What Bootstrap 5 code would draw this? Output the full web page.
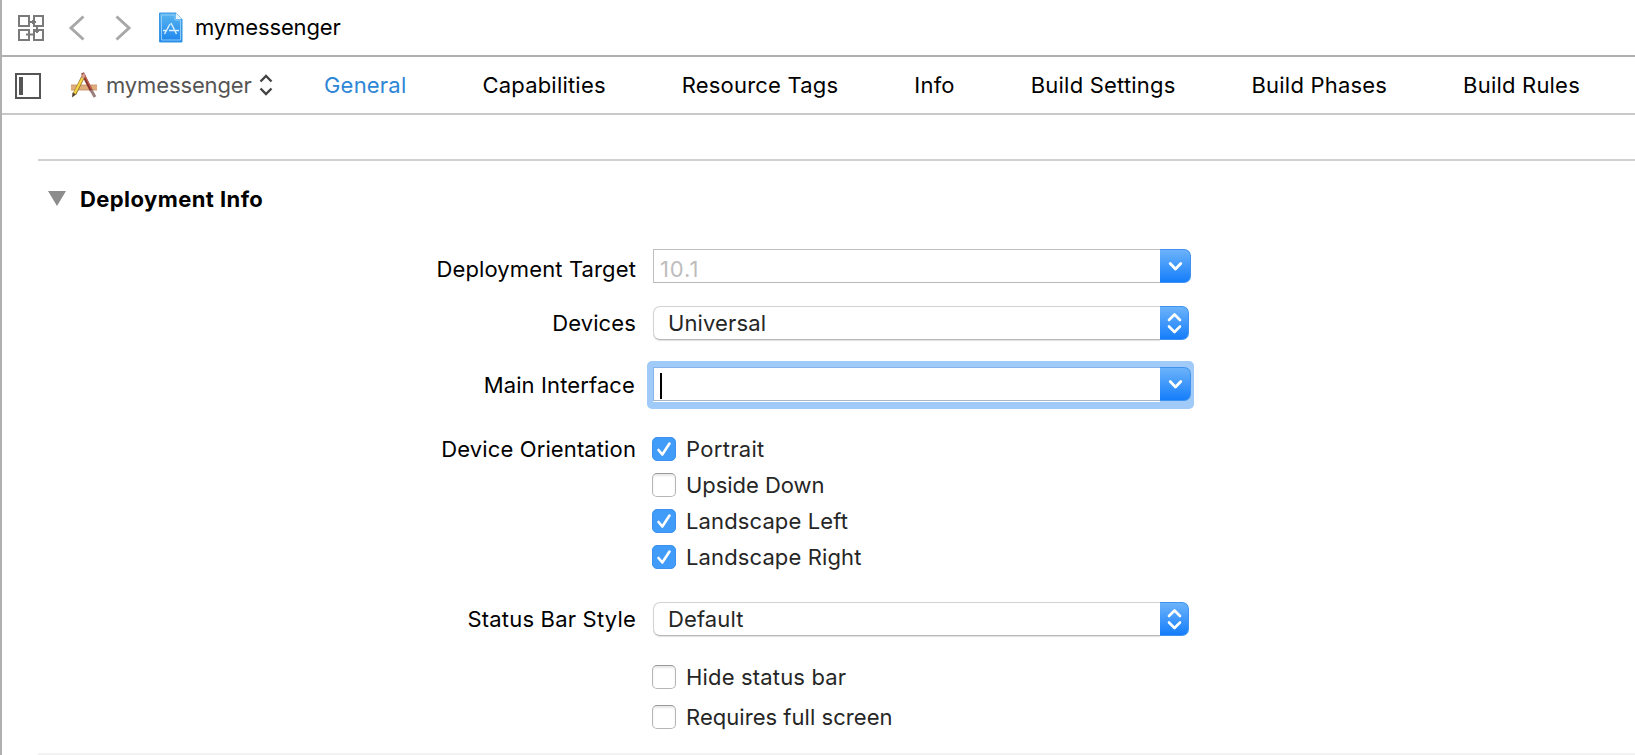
<!DOCTYPE html>
<html lang="en">
<head>
<meta charset="utf-8">
<title>mymessenger</title>
<link rel="stylesheet" href="https://cdn.jsdelivr.net/npm/bootstrap@5.3.0/dist/css/bootstrap.min.css">
<style>
body{font-family:Inter,"Liberation Sans",sans-serif;font-size:22px;line-height:34px;letter-spacing:.12px;color:#000;background:#fff;overflow:hidden}
.editor{height:755px;border-left:2px solid #b0b0b0;overflow:hidden}
svg{display:block;flex:none}
.jumpbar{height:57px;border-bottom:2px solid #b0b0b0;padding-left:15px}
.back{margin-left:23px}
.forward{margin-left:28px}
.doc-icon{margin-left:27px}
.doc-name{margin:-2px 0 0 12px;letter-spacing:-.12px}
.tabbar{height:58px;border-bottom:2px solid #c9c9c9;padding-left:13px}
.app-icon{margin-left:29px}
.project{color:#555;width:153px;margin-left:8px;letter-spacing:-.12px}
.tabs{gap:76px;letter-spacing:.2px;margin-left:51px}
.tabs a{color:#000;text-decoration:none}
.tabs a.current{color:#2d86d6}
.section-body{margin-left:36px}
.rule{height:2px;background:#d2d2d2;margin-top:44px}
.section-head{padding:21px 0 0 10px}
.heading{font-weight:700;font-size:22px;letter-spacing:.42px;line-height:34px;margin:0 0 0 14px}
.label-col{width:600px;text-align:right;flex:none;padding-right:2px}
.line{height:34px}
.control{width:536px;height:34px;flex:none;margin-left:15px}
.combo{width:538px}
.field{background:#fff;border:1px solid #c0c0c0;border-right:0;border-bottom-color:#b8b8b8;color:#bdbdbd;padding-left:6px}
.popup .field{border-color:#d2d2d2;border-bottom-color:#b8b8b8;border-radius:7px 0 0 7px;color:#262626;padding-left:14px;line-height:32px;box-shadow:0 1px 1px #e2e2e2}
.knob{width:29px;height:34px;background:linear-gradient(#6cb3fa,#157dfb);border:1px solid #3f93ee;border-width:1px 1px 1px 0;border-radius:0 7px 7px 0}
.knob svg{margin-top:-1px}
.combo .knob{width:31px}
.focused{position:relative;z-index:0}
.focused::before{content:"";position:absolute;z-index:-1;inset:-6px -3px -8px -6px;background:#a0cbf9;border-radius:5px}
.focused .field{border-color:#86b4e8;border-bottom-color:#a9b6c4;box-shadow:0 1px 0 #fff}
.caret{width:2px;height:26px;background:#000;margin-top:5px}
.opt{height:36px;color:#262626}
.box{width:24px;height:24px;border-radius:5px;border:1px solid #b5b5b5;border-top-color:#999;box-shadow:inset 0 2px 2px #e8e8e8;margin-right:10px;flex:none}
.box.on{background:#419bf9;border-color:#3c92ee;box-shadow:none}
.box svg{margin:-1px}
</style>
<script src="https://cdn.jsdelivr.net/npm/bootstrap@5.3.0/dist/js/bootstrap.bundle.min.js"></script>
</head>
<body>
<svg width="0" height="0" class="position-absolute"><defs>
<path id="down" d="M10.200 14.500l5.300 5.500 5.300-5.500" fill="none" stroke="#fff" stroke-width="2.800" stroke-linecap="round" stroke-linejoin="round"/>
<path id="updown" d="M9 14l5.500-5.500 5.500 5.500M9 20.500l5.500 5.500 5.500-5.500" fill="none" stroke="#fff" stroke-width="2.600" stroke-linecap="round" stroke-linejoin="round"/>
<path id="tick" d="M6.500 13l3.800 4.500L17.500 6.500" fill="none" stroke="#fff" stroke-width="2.600" stroke-linecap="round" stroke-linejoin="round"/>
</defs></svg>
<main class="editor">
  <header class="jumpbar d-flex align-items-center">
    <svg width="28" height="28" viewBox="0 0 28 28" fill="none" stroke="#7a7a7a" stroke-width="2"><path d="M2 2h10v10H2zM17 2h9v10h-9zM2 16h10v10H2zM17 16h9v10h-9zM12 8h7M16 6v4M20 12v7M18 17h4M9 20.500h8M12 18v5"/></svg>
    <svg class="back" width="18" height="26" viewBox="0 0 18 26" fill="none" stroke="#a8a8a8" stroke-width="3"><path d="M15.500 1.500L3 13l12.500 11.500"/></svg>
    <svg class="forward" width="18" height="26" viewBox="0 0 18 26" fill="none" stroke="#a8a8a8" stroke-width="3"><path d="M2.500 1.500L15 13 2.500 24.500"/></svg>
    <svg class="doc-icon" width="24" height="32" viewBox="0 0 24 32"><defs><linearGradient id="doc" x2="0" y2="1"><stop stop-color="#59b5ef"/><stop offset="1" stop-color="#1c85ee"/></linearGradient></defs><path d="M.5 1H17l6 6v23H.5z" fill="url(#doc)" stroke="#3a97e2"/><path d="M2.500 3H16v5h5.500v20h-19z" fill="none" stroke="#8fcdf8"/><path d="M17 1v6h6z" fill="#e8f5fe"/><path d="M5.500 22L11 12M17.500 22L12 11M4 18.500h4M10 18.500h5M16.500 18.500h3.500" fill="none" stroke="#d8effd" stroke-width="1.500"/></svg>
    <span class="doc-name">mymessenger</span>
  </header>
  <nav class="tabbar d-flex align-items-center">
    <svg width="26" height="28" viewBox="0 0 26 28"><path d="M1 3h24v24H1z" fill="#fff" stroke="#555" stroke-width="2"/><path d="M4 6h4v18H4z" fill="#555"/></svg>
    <svg class="app-icon" width="28" height="28" viewBox="0 0 28 28"><path d="M1 14h26v5H1z" fill="#e0ad7c"/><path d="M1 14h26M1 19h26" stroke="#c48c5e" stroke-width=".8"/><path d="M12.500 2l9 18" stroke="#8b3830" stroke-width="3.200"/><path d="M14.500 4l7 14" stroke="#cf6a58"/><path d="M21 19l4 7" stroke="#9a7f7c" stroke-width="3"/><path d="M14 4L4.500 23" stroke="#8a6a20" stroke-width="3.800"/><path d="M12.500 7L4.500 22.500" stroke="#f6d447" stroke-width="2.500"/><path d="M14.500 3l-2 4" stroke="#d99a90" stroke-width="3"/><path d="M2.500 21.500l-.5 5 4-3z" fill="#54442f"/></svg>
    <span class="project">mymessenger</span>
    <svg width="14" height="22" viewBox="0 0 14 22" fill="none" stroke="#444" stroke-width="2.400"><path d="M1.500 7.500L7 2l5.500 5.500M1.500 14.500L7 20l5.500-5.500"/></svg>
    <div class="tabs d-flex text-nowrap"><a class="current">General</a><a>Capabilities</a><a>Resource Tags</a><a>Info</a><a>Build Settings</a><a>Build Phases</a><a>Build Rules</a></div>
  </nav>
  <section class="section-body">
    <div class="rule"></div>
    <div class="section-head d-flex align-items-center"><svg width="18" height="16" viewBox="0 0 18 16"><path d="M0 0h18L9 15z" fill="#8c8c8c"/></svg><h2 class="heading">Deployment Info</h2></div>
    <div class="line d-flex" style="margin-top:33px"><label class="label-col" style="padding-top:3px">Deployment Target</label><div class="control combo d-flex"><div class="field flex-fill" style="padding-top:2px;letter-spacing:.9px">10.1</div><div class="knob"><svg width="31" height="34"><use href="#down"/></svg></div></div></div>
    <div class="line d-flex" style="margin-top:23px"><label class="label-col">Devices</label><div class="control popup d-flex"><div class="field flex-fill">Universal</div><div class="knob"><svg width="29" height="34"><use href="#updown"/></svg></div></div></div>
    <div class="line d-flex" style="margin-top:27px"><label class="label-col" style="padding:1px 3px 0 0">Main Interface</label><div class="control combo focused d-flex"><div class="field flex-fill"><div class="caret"></div></div><div class="knob"><svg width="31" height="34"><use href="#down"/></svg></div></div></div>
    <div class="d-flex" style="margin-top:30px"><label class="label-col" style="padding-top:1px">Device Orientation</label>
      <div style="margin-left:14px">
        <div class="opt d-flex align-items-center"><span class="box on"><svg width="24" height="24"><use href="#tick"/></svg></span><span style="letter-spacing:.3px">Portrait</span></div>
        <div class="opt d-flex align-items-center"><span class="box"></span><span style="letter-spacing:-.04px">Upside Down</span></div>
        <div class="opt d-flex align-items-center"><span class="box on"><svg width="24" height="24"><use href="#tick"/></svg></span>Landscape Left</div>
        <div class="opt d-flex align-items-center"><span class="box on"><svg width="24" height="24"><use href="#tick"/></svg></span>Landscape Right</div>
      </div></div>
    <div class="line d-flex" style="margin-top:27px"><label class="label-col" style="letter-spacing:.2px">Status Bar Style</label><div class="control popup d-flex"><div class="field flex-fill">Default</div><div class="knob"><svg width="29" height="34"><use href="#updown"/></svg></div></div></div>
    <div style="margin:23px 0 0 614px"><div class="opt d-flex align-items-center" style="letter-spacing:.17px"><span class="box"></span>Hide status bar</div><div class="opt d-flex align-items-center mt-1" style="letter-spacing:.04px"><span class="box"></span>Requires full screen</div></div>
    <div style="height:2px;margin-top:18px;background:#f3f3f3"></div>
  </section>
</main>
</body>
</html>
